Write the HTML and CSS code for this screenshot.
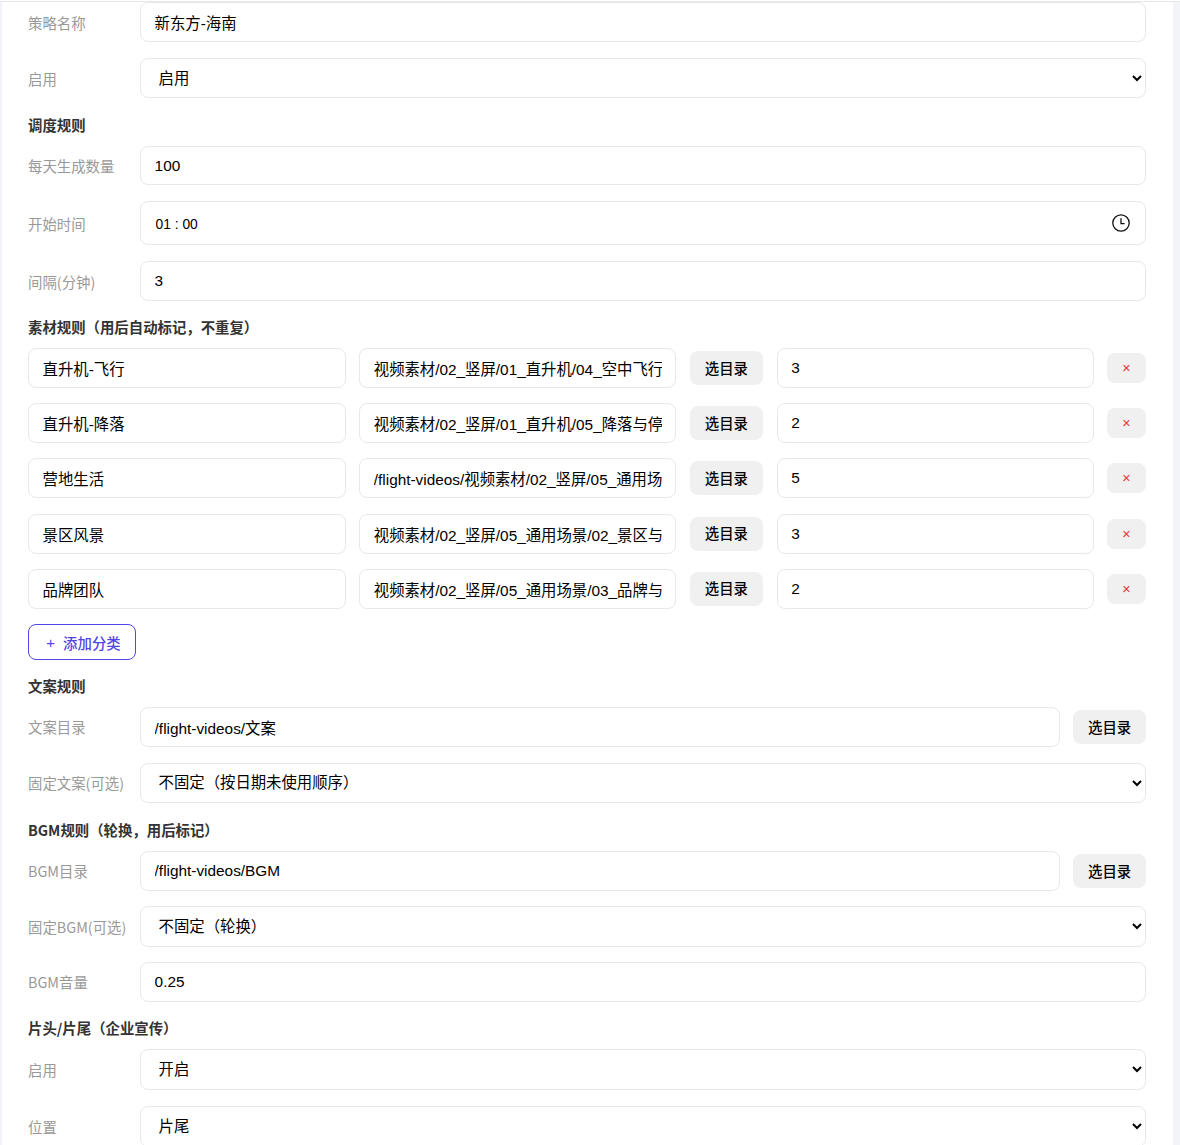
FILE: index.html
```html
<!DOCTYPE html>
<html lang="zh-CN">
<head>
<meta charset="utf-8">
<title>策略</title>
<link rel="stylesheet" href="styles.css">
</head>
<body>
<main class="card">
  <div class="row"><label class="label">策略名称</label><input class="field" value="新东方-海南"></div>
  <div class="row r-enable"><label class="label">启用</label><select class="field sel"><option>启用</option></select></div>
  <h4 class="heading">调度规则</h4>
  <div class="row"><label class="label">每天生成数量</label><input class="field f39" value="100"></div>
  <div class="row"><label class="label">开始时间</label>
    <div class="timewrap"><input class="field time" value="01 : 00">
      <svg class="clock" viewBox="0 0 18 18" width="18" height="18" fill="none" stroke="#111" stroke-width="1.3"><circle cx="9" cy="9" r="8.2"/><path d="M9 4.2V9.6H12.6"/></svg>
    </div>
  </div>
  <div class="row"><label class="label">间隔(分钟)</label><input class="field" value="3"></div>
  <h4 class="heading">素材规则（用后自动标记，不重复）</h4>
  <div class="cats">
    <div class="cat"><input class="field" value="直升机-飞行"><input class="field" value="视频素材/02_竖屏/01_直升机/04_空中飞行"><button class="pick">选目录</button><input class="field" value="3"><button class="del">×</button></div>
    <div class="cat"><input class="field" value="直升机-降落"><input class="field" value="视频素材/02_竖屏/01_直升机/05_降落与停机"><button class="pick">选目录</button><input class="field" value="2"><button class="del">×</button></div>
    <div class="cat"><input class="field" value="营地生活"><input class="field" value="/flight-videos/视频素材/02_竖屏/05_通用场景/01_营地生活"><button class="pick">选目录</button><input class="field" value="5"><button class="del">×</button></div>
    <div class="cat"><input class="field" value="景区风景"><input class="field" value="视频素材/02_竖屏/05_通用场景/02_景区与风景"><button class="pick">选目录</button><input class="field" value="3"><button class="del">×</button></div>
    <div class="cat"><input class="field" value="品牌团队"><input class="field" value="视频素材/02_竖屏/05_通用场景/03_品牌与团队"><button class="pick">选目录</button><input class="field" value="2"><button class="del">×</button></div>
  </div>
  <button class="add"><span class="plus">+</span>添加分类</button>
  <h4 class="heading">文案规则</h4>
  <div class="row"><label class="label">文案目录</label><input class="field" value="/flight-videos/文案"><button class="pick">选目录</button></div>
  <div class="row r-enable"><label class="label">固定文案(可选)</label><select class="field sel"><option>不固定（按日期未使用顺序）</option></select></div>
  <h4 class="heading">BGM规则（轮换，用后标记）</h4>
  <div class="row r-tight"><label class="label">BGM目录</label><input class="field" value="/flight-videos/BGM"><button class="pick">选目录</button></div>
  <div class="row r-tight"><label class="label">固定BGM(可选)</label><select class="field sel tall"><option>不固定（轮换）</option></select></div>
  <div class="row"><label class="label">BGM音量</label><input class="field" value="0.25"></div>
  <h4 class="heading">片头/片尾（企业宣传）</h4>
  <div class="row"><label class="label">启用</label><select class="field sel tall"><option>开启</option></select></div>
  <div class="row"><label class="label">位置</label><select class="field sel tall"><option>片尾</option></select></div>
</main>
</body>
</html>
```
FILE: styles.css
```css
* { box-sizing: border-box; }
html { height: 100%; background: #fff; overflow: hidden; }
body {
  margin: 1px 0 0;
  height: 1160px;
  background: #f3f4f9;
  border-top: 1px solid #e6e6e6;
  font-family: "Liberation Sans", "Noto Sans CJK SC", sans-serif;
}
.card {
  margin: 0 7px 0 2px;
  padding: 0 27px 0 26px;
  height: 1160px;
  background: #fff;
}
.row { display: flex; align-items: center; margin-bottom: 16px; }
.label {
  flex: 0 0 112px;
  font-size: 14.4px;
  color: #999;
  font-family: "Noto Sans CJK SC", sans-serif;
}
.field {
  flex: 1 1 0;
  min-width: 0;
  height: 40px;
  padding: 0 13.6px;
  border: 1px solid #e8e8e8;
  border-radius: 8px;
  background: #fff;
  color: #000;
  font-size: 15.36px;
  font-family: "Liberation Sans", "Noto Sans CJK SC", sans-serif;
  outline: none;
}
.f39 { height: 39px; }
.tall { height: 41px; }
.timewrap { position: relative; flex: 1 1 0; display: flex; }
.time {
  height: 44px;
  padding: 3px 13.6px 0 14.6px;
  font-size: 13.8px;
}
.clock { position: absolute; top: 13px; right: 16px; }
.r-enable { margin-bottom: 17px; }
.r-tight { margin-bottom: 15px; }
.heading {
  margin: 0 0 11px;
  font-size: 14.4px;
  line-height: 20px;
  font-weight: 700;
  color: #333;
  font-family: "Noto Sans CJK SC", sans-serif;
}
.cats { display: flex; flex-direction: column; gap: 15.2px; }
.cat {
  display: grid;
  grid-template-columns: 317.6px 317px 73.2px 317px 38.8px;
  align-items: center;
  gap: 13.6px;
}
.pick {
  flex: 0 0 72.8px;
  height: 34px;
  border: 0;
  border-radius: 8px;
  background: #f0f0f0;
  color: #000;
  font-size: 14.4px;
  font-weight: 500;
  padding: 0;
  font-family: "Noto Sans CJK SC", sans-serif;
}
.row .pick { margin-left: 13.6px; }
.cat .pick { padding-bottom: 2px; }
.del {
  height: 30px;
  border: 0;
  border-radius: 8px;
  background: #f0f0f0;
  color: #e53935;
  font-size: 14.4px;
  padding: 0;
  font-family: "Liberation Sans", sans-serif;
}
.add {
  display: flex;
  align-items: center;
  justify-content: center;
  gap: 8px;
  width: 108px;
  height: 36px;
  margin: 15.2px 0 16px;
  padding: 2px 0 0 3px;
  border: 1px solid #4f46e5;
  border-radius: 8px;
  background: #fff;
  color: #4f46e5;
  font-size: 14.4px;
  font-weight: 500;
  font-family: "Noto Sans CJK SC", sans-serif;
}
.plus { font-family: "Liberation Sans", sans-serif; font-size: 15px; font-weight: 400; }
```
